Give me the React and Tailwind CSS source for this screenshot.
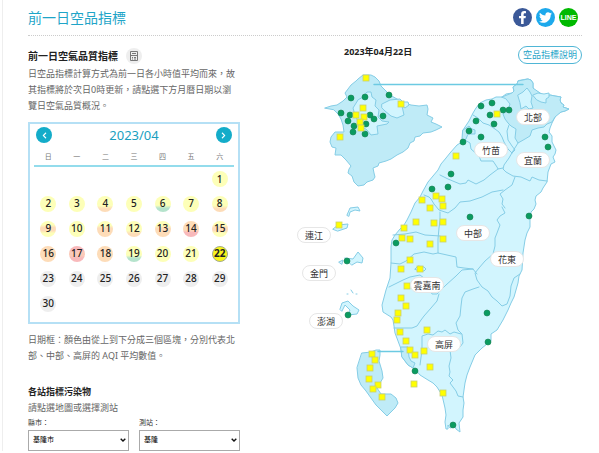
import React from "react";
import { FaFacebookF, FaTwitter, FaChevronLeft, FaChevronRight } from "react-icons/fa";

const BANDS = {
  none: "bg-[#eeeeee]",
  yyy: "bg-[#fdffb8]",
  yyo: "bg-[linear-gradient(#fdffb8_60%,#fddcb8_80%)]",
  yyg: "bg-[linear-gradient(#fdffb8_58%,#b5e3cc_76%)]",
  yoy: "bg-[linear-gradient(#fdffb8_24%,#fddcb8_40%,#fddcb8_60%,#fdffb8_76%)]",
  yoo: "bg-[linear-gradient(#fdffb8_28%,#fddcb8_44%)]",
  ooo: "bg-[#fddcb8]",
  oor: "bg-[linear-gradient(#fddcb8_56%,#f8b9bb_72%)]",
  ror: "bg-[linear-gradient(#f8b9bb_24%,#fbcab9_40%,#fbcab9_60%,#f8b9bb_76%)]",
};

const DAY_BANDS = [
  "yyy",
  "yyy", "yyy", "yyo", "yyy", "yyg", "yyy", "yyo",
  "yoy", "yyy", "yoo", "yyo", "yoo", "oor", "yoy",
  "ooo", "ror", "ooo", "yyg", "yyy", "yyy", "yyy",
];

const WEEKDAYS = ["日", "一", "二", "三", "四", "五", "六"];

const REGIONS = [
  { name: "北部", place: "left-[243px] top-[51px]" },
  { name: "竹苗", place: "left-[201px] top-[84px]" },
  { name: "宜蘭", place: "left-[243px] top-[94px]" },
  { name: "連江", place: "left-[24px] top-[169px]" },
  { name: "金門", place: "left-[29px] top-[207px]" },
  { name: "澎湖", place: "left-[36px] top-[255px]" },
  { name: "雲嘉南", place: "left-[137px] top-[219px]" },
  { name: "中部", place: "left-[183px] top-[167px]" },
  { name: "花東", place: "left-[217px] top-[193px]" },
  { name: "高屏", place: "left-[154px] top-[278px]" },
];

const GOOD = [
  [351, 98], [365, 97], [389, 95], [341, 113], [350, 115], [348, 121], [354, 126], [353, 132], [365, 134],
  [366, 124], [374, 119], [370, 115], [383, 116], [481, 106], [492, 103], [490, 115], [494, 124], [476, 121],
  [469, 131], [463, 142], [481, 137], [503, 110], [509, 110], [545, 137], [548, 147], [451, 174], [448, 187],
  [432, 189], [396, 243], [347, 261], [348, 315], [470, 217], [529, 216], [487, 313], [488, 342], [415, 371],
  [453, 425],
];

const MODERATE = [
  [366, 78], [401, 104], [363, 108], [356, 115], [364, 117], [360, 122], [361, 128], [340, 137], [497, 114],
  [456, 156], [422, 200], [436, 196], [442, 199], [443, 206], [430, 208], [416, 222], [434, 223], [443, 222],
  [404, 228], [402, 238], [410, 239], [430, 244], [443, 239], [410, 260], [401, 269], [420, 269], [407, 286],
  [401, 298], [406, 306], [398, 313], [397, 320], [339, 225], [400, 332], [406, 341], [410, 350], [415, 355],
  [424, 351], [427, 330], [430, 367], [414, 384], [443, 393], [372, 354], [375, 360], [370, 368], [369, 379],
  [378, 385], [373, 389], [382, 397],
];

function TaiwanMap() {
  return (
    <svg viewBox="290 66 292 374" className="block h-[374px] w-[292px]" role="img" aria-label="測站地圖">
      <g stroke="#85cde6" strokeWidth="1" strokeLinejoin="round" strokeLinecap="round" fill="#d2f5fe">
        {/* Main island */}
        <path d="M528 79 531 80 533 83 533 88 536 91 540 93 544 96 550 95 555 96 561 97 560 100 561 103 564 105 563 107 569 109 565 111 561 112 557 114 555 117 552 123 550 128 549 132 552 136 552 142 554 146 556 150 555 154 553 157 555 162 551 164 548 172 547 182 543 188 541 192 536 196 535 200 536 204 534 209 531 212 530 220 530 227 527 233 525 240 523 253 522 270 519 276 518 283 514 297 511 303 508 310 503 320 497 330 491 334 491 341 487 344 482 348 475 355 470 367 467 375 465 383 463 397 464 403 463 410 463 417 459 423 460 432 456 429 455 427 450 428 448 425 448 429 446 429 445 422 446 415 445 408 442 395 437 387 433 383 428 380 420 375 415 369 408 365 402 357 401 349 395 333 394 326 393 320 391 317 383 312 382 305 386 290 390 278 391 263 391 247 392 240 395 235 400 229 404 225 407 220 411 212 415 203 420 197 423 191 428 182 433 176 438 170 441 164 446 158 450 153 457 145 462 142 463 137 463 130 469 121 473 113 476 108 480 103 486 100 492 99 496 97 502 97 506 94 512 93 514 91 513 87 517 84 518 81Z" />
        {/* Northern area */}
        <g fill="#bfebf7">
          <path d="M502 97 512 93 514 91 513 87 517 84 518 81 528 79 531 80 533 83 533 88 540 93 544 96 550 95 555 96 561 97 560 100 561 103 564 105 563 107 569 109 565 111 561 112 555 117 552 122 547 124 544 127 538 128 532 130 530 136 525 139 518 143 515 138 516 129 511 126 508 123 505 119 503 114 508 110 510 104 506 99Z" />
          <path d="M463 130 466 128 469 126 472 129 475 130 475 134 468 134 466 139 462 142Z" />
        </g>
        <path d="M518 95 523 92 527 88 530 92 532 96 531 102 533 108 529 109 526 106 521 109 520 103Z M533 95 538 93 544 94 549 93 549 97 546 99 546 103 541 102 537 100Z" />
        {/* County borders */}
        <g fill="none">
          <path d="M473 115 478 118 483 123 489 125 495 129 499 132 502 137 504 142 508 149 512 153M509 125 507 131 508 140 512 146 515 150 512 153" />
          <path d="M518 143 513 151 509 158 504 165 503 169 506 172 513 176 521 177 530 181 532 177 539 180 547 181" />
          <path d="M465 140 470 143 471 149 479 156 481 161 493 161 497 167 498 169 503 168" />
          <path d="M440 175 448 179 460 184 466 183 468 180 476 184 484 180 490 175 498 169" />
          <path d="M515 177 512 185 505 190 500 194 503 199 502 204 505 208" />
          <path d="M424 195 429 197 431 199 434 204 439 210 448 213 455 208 460 202 470 201 482 197 492 192 503 190" />
          <path d="M440 212 440 220 439 228 438 239 438 253 447 255 456 257 457 267 464 268 473 269 477 274" />
          <path d="M502 207 505 213 500 216 497 220 500 225 497 233 495 238 495 246 493 254 485 261 479 268 475 273 477 280 482 287 488 291 492 297 497 301 502 306 507 304 510 296 511 286 514 278 520 274" />
          <path d="M393 235 405 234 416 232 425 235 440 236" />
          <path d="M391 263 400 264 406 261 414 254 424 252 433 254 438 253" />
          <path d="M389 287 395 284 403 280 410 277 420 275 424 278 432 294 437 294 446 285 456 276 462 270 473 269" />
          <path d="M394 328 402 328 412 328 417 326 421 320 424 316 431 308 437 301 439 294" />
          <path d="M415 269 418 266 424 267 426 269 424 271 417 270Z" />
          <path d="M479 287 473 289 465 292 462 298 461 306 460 316 456 323 458 330 462 334 463 343 460 347 450 350 451 358 449 366 450 372 449 376 453 380 450 383 456 391 458 396 463 397" />
          <path d="M420 365 422 350 422 336 428 334 433 335 438 331 442 332 445 330 450 334 454 332 461 334" />
          <path d="M401 347 408 347 409 357 411 361 415 363 413 368 408 365 402 357Z" fill="#bfebf7" />
        </g>
        {/* Enlarged Taipei area */}
        <path fill="#bfebf7" d="M325 108 331 106 337 105 343 101 347 97 345 93 351 85 356 81 358 79 363 75 371 75 375 77 379 81 381 86 386 91 390 95 397 99 401 101 405 103 411 105 419 106 427 105 428 109 427 115 433 118 431 122 436 124 442 127 436 130 431 132 423 133 420 136 415 137 414 141 410 143 408 148 403 152 397 155 391 159 386 161 379 163 378 166 373 168 374 173 375 177 373 180 367 182 364 185 358 186 354 182 352 176 348 173 349 169 351 166 346 160 341 155 335 155 336 148 332 147 330 142 331 137 335 132 344 132 343 125 341 119 338 114 334 110Z" />
        <path d="M363 97 367 92 371 92 372 97 376 100 375 106 379 110 378 117 382 121 389 122 387 124 377 126 378 134 371 135 367 130 360 125 355 115 353 108 358 100Z M382 104 390 100 400 99 403 102 408 102 409 105 405 108 402 106 404 115 397 118 391 116 385 111 382 108Z" />
        {/* Enlarged Kaohsiung area */}
        <path fill="#bfebf7" d="M362 353 371 352 376 350 380 350 380 355 379 361 382 371 383 378 377 388 381 394 391 394 396 398 398 403 395 408 387 416 382 411 376 405 371 398 366 391 361 385 358 378 357 368Z" />
        {/* Offshore islands */}
        <path d="M347 215 350 208 358 207 360 211 355 210 350 212 349 216Z M333 229 338 225 348 224 347 228 338 231Z" />
        <path d="M345 258 353 259 358 252 363 258 362 263 357 262 352 265Z M339 262 343 260 342 264Z" />
        <path d="M340 309 342 303 348 301 353 306 359 310 357 314 348 315 350 310 345 305 342 311Z M347 294h1 M356 294h1 M351 290 353 293" />
        <path fill="none" stroke="#6ccae2" strokeWidth="1.4" d="M374 84.500H523M378 351.500H403" />
      </g>
      <g fill="#0b9b60" stroke="#168052" strokeWidth="0.6">
        {GOOD.map(([x, y]) => (
          <circle key={`${x}-${y}`} cx={x} cy={y} r="3" />
        ))}
      </g>
      <g fill="#ffff00" stroke="#c9cf72" strokeWidth="0.8">
        {MODERATE.map(([x, y]) => (
          <rect key={`${x}-${y}`} x={x - 3} y={y - 3} width="6" height="6" />
        ))}
      </g>
    </svg>
  );
}

function Calendar() {
  return (
    <section className="mt-2 border-2 border-[#b5e0f5] px-1 pt-px pb-[6px]" aria-label="2023/04">
      <div className="flex h-5 items-center justify-between px-[2px]">
        <button type="button" aria-label="上個月" className="flex size-4 items-center justify-center rounded-full bg-[#14acc9] text-white">
          <FaChevronLeft size={7} />
        </button>
        <h3 className="text-[13px] leading-5 text-[#1a9fbf]">2023/04</h3>
        <button type="button" aria-label="下個月" className="flex size-4 items-center justify-center rounded-full bg-[#14acc9] text-white">
          <FaChevronRight size={7} />
        </button>
      </div>
      <table className="w-full table-fixed border-collapse text-center">
        <thead>
          <tr className="border-b-2 border-[#93dcec]">
            {WEEKDAYS.map((day) => (
              <th key={day} scope="col" className="h-[21px] p-0 pt-1 text-[7px] leading-3 font-normal text-[#777]">
                {day}
              </th>
            ))}
          </tr>
        </thead>
        <tbody>
          {[0, 1, 2, 3, 4, 5].map((week) => (
            <tr key={week}>
              {WEEKDAYS.map((name, column) => {
                const day = week * 7 + column - 5;
                if (day < 1 || day > 30) return <td key={name} className="h-[25px] p-0" />;
                return (
                  <td key={name} className="h-[25px] p-0">
                    <button
                      type="button"
                      className={
                        day === 22
                          ? "mx-auto flex size-4 items-center justify-center rounded-full border border-[#a3ab8c] bg-[#f9f51b] text-[10px] font-bold text-[#222]"
                          : `mx-auto flex size-4 items-center justify-center rounded-full text-[10px] font-medium text-[#222] ${BANDS[DAY_BANDS[day - 1] || "none"]}`
                      }
                    >
                      {day}
                    </button>
                  </td>
                );
              })}
            </tr>
          ))}
        </tbody>
      </table>
    </section>
  );
}

function StationSelect({ id, label, value }) {
  return (
    <div className="flex-1">
      <label htmlFor={id} className="block text-[7px] leading-[14px] text-[#333]">
        {label}
      </label>
      <div className="relative">
        <select id={id} className="block h-[21px] w-full appearance-none border border-[#aaa] bg-white pl-1 text-[7px] text-black">
          <option>{value}</option>
        </select>
        <svg viewBox="0 0 6 4" className="pointer-events-none absolute top-2 right-[3px] h-1 w-1.5" aria-hidden="true">
          <path d="M.7.7 3 3 5.300.7" fill="none" stroke="#111" strokeWidth="1.4" />
        </svg>
      </div>
    </div>
  );
}

export default function App() {
  return (
    <div className="bg-white font-['Noto_Sans','Noto_Sans_CJK_TC',sans-serif] text-[#666]">
      <main className="ml-[2px] border-l border-[#eee] pr-[17px] pl-[25px]">
        <header className="flex h-9 items-center justify-between border-b border-dotted border-[#ccc]">
          <h1 className="text-[14px] leading-5 text-[#1fa5c8]">前一日空品指標</h1>
          <nav className="flex gap-1 pr-1" aria-label="分享">
            <a href="#facebook" aria-label="Facebook" className="flex size-[19px] items-center justify-center rounded-full bg-[#3b5998] text-white">
              <FaFacebookF size={13} />
            </a>
            <a href="#twitter" aria-label="Twitter" className="flex size-[19px] items-center justify-center rounded-full bg-[#1da9ec] text-white">
              <FaTwitter size={13} />
            </a>
            <a href="#line" className="flex size-[19px] items-center justify-center rounded-full bg-[#00b900] font-['Liberation_Sans',sans-serif] text-[7px] leading-none font-bold text-white">
              LINE
            </a>
          </nav>
        </header>
        <div className="flex items-start justify-between">
          <div className="w-[212px] shrink-0 pt-3">
            <h2 className="flex h-4 items-center gap-2 text-[10px] font-bold text-[#222]">
              前一日空氣品質指標
              <button type="button" aria-label="計算方式" className="flex size-4 items-center justify-center rounded-full bg-[#eee]">
                <svg viewBox="0 0 10 10" className="size-[10px]" fill="none" stroke="#777" strokeWidth="1">
                  <path d="M1.500.5h7v9h-7zM3 2.500h4M1.500 4.500h7M3 6.500h1M5 6.500h2M3 8h1M5 8h2" />
                </svg>
              </button>
            </h2>
            <p className="mt-[2px] text-[9px] leading-4">
              日空品指標計算方式為前一日各小時值平均而來，故其指標將於次日0時更新，請點選下方月曆日期以瀏覽日空氣品質概況。
            </p>
            <Calendar />
            <p className="mt-2 text-[9px] leading-4">
              日期框：顏色由從上到下分成三個區塊，分別代表北部、中部、高屏的 AQI 平均數值。
            </p>
            <h2 className="mt-5 text-[9px] leading-4 font-bold text-[#222]">各站指標污染物</h2>
            <p className="text-[9px] leading-4">請點選地圖或選擇測站</p>
            <div className="flex gap-[10px]">
              <StationSelect id="county" label="縣市：" value="基隆市" />
              <StationSelect id="station" label="測站：" value="基隆" />
            </div>
          </div>
          <section className="w-[292px] shrink-0">
            <div className="flex items-start justify-between pt-[10px] pb-[2px] pl-[54px]">
              <h2 className="text-[9px] leading-3 font-bold text-[#222]">2023年04月22日</h2>
              <a href="#about" className="flex h-[18px] items-center rounded-full border border-[#4fb6d6] px-1 text-[9px] leading-4 text-[#1fa5c8]">
                空品指標說明
              </a>
            </div>
            <div className="relative">
              <TaiwanMap />
              {REGIONS.map(({ name, place }) => (
                <button
                  key={name}
                  type="button"
                  className={`absolute flex h-4 w-[34px] -translate-x-[17px] -translate-y-2 items-center justify-center rounded-full border border-[#e6e6e6] bg-white text-[9px] leading-none whitespace-nowrap text-[#333] ${place}`}
                >
                  {name}
                </button>
              ))}
            </div>
          </section>
        </div>
      </main>
    </div>
  );
}
